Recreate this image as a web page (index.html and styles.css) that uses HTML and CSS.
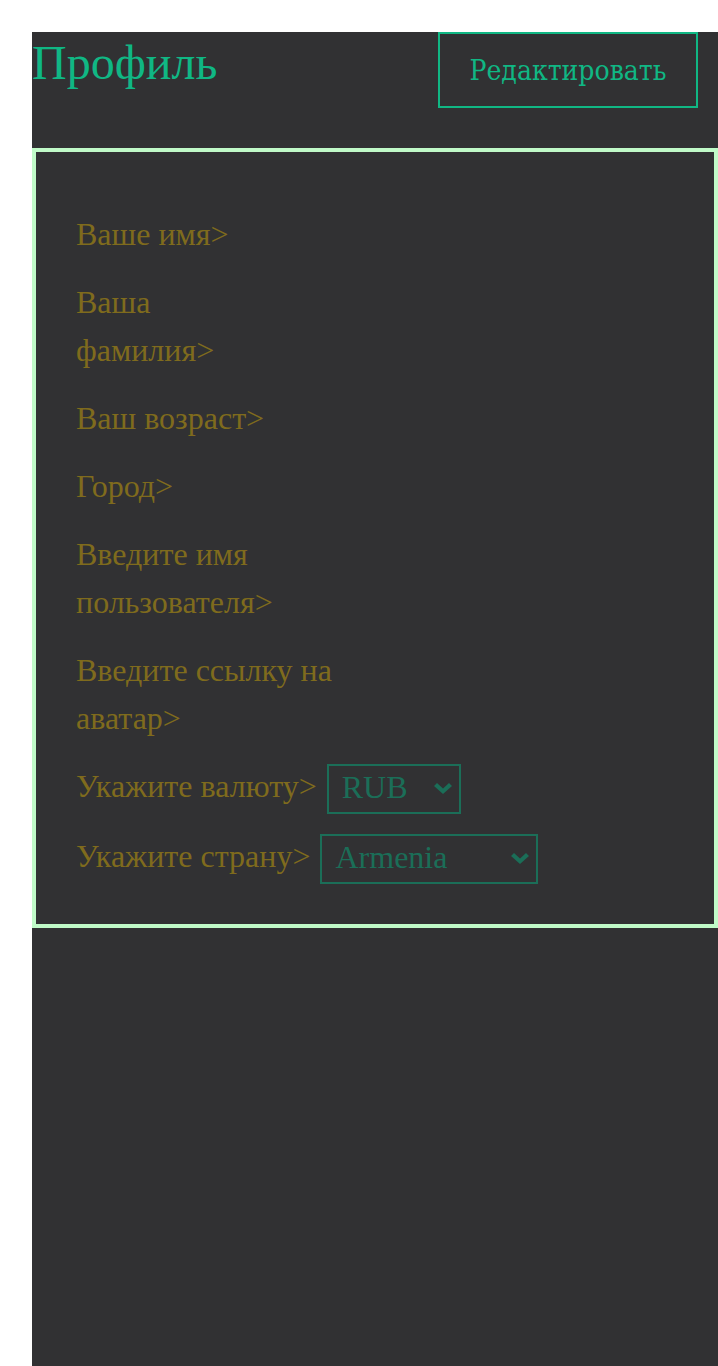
FILE: index.html
```html
<!DOCTYPE html>
<html lang="ru">
<head>
<meta charset="utf-8">
<title>Профиль</title>
<link rel="stylesheet" href="styles.css">
</head>
<body>
<main class="page">
  <header class="header">
    <h1 class="title">Профиль</h1>
    <button class="edit-btn" type="button">Редактировать</button>
  </header>
  <form class="profile-form">
    <div class="row"><label class="label" for="f-name">Ваше имя&gt;</label><input class="ghost" id="f-name" type="text"></div>
    <div class="row"><label class="label" for="f-surname">Ваша фамилия&gt;</label><input class="ghost" id="f-surname" type="text"></div>
    <div class="row"><label class="label" for="f-age">Ваш возраст&gt;</label><input class="ghost" id="f-age" type="text"></div>
    <div class="row"><label class="label" for="f-city">Город&gt;</label><input class="ghost" id="f-city" type="text"></div>
    <div class="row"><label class="label" for="f-user">Введите имя пользователя&gt;</label><input class="ghost" id="f-user" type="text"></div>
    <div class="row"><label class="label" for="f-avatar">Введите ссылку на аватар&gt;</label><input class="ghost" id="f-avatar" type="text"></div>
    <div class="row select-row">
      <label class="label" for="f-cur">Укажите валюту&gt;</label>
      <div class="select-wrap select-currency">
        <select class="select" id="f-cur"><option>RUB</option><option>USD</option><option>EUR</option></select>
        <svg class="chev" viewBox="0 0 18 11" aria-hidden="true"><path d="M0 3 L3 0 L9 5.6 L15 0 L18 3 L9 11 Z" fill="currentColor"/></svg>
      </div>
    </div>
    <div class="row select-row">
      <label class="label" for="f-country">Укажите страну&gt;</label>
      <div class="select-wrap select-country">
        <select class="select" id="f-country"><option>Armenia</option><option>Russia</option><option>Kazakhstan</option></select>
        <svg class="chev" viewBox="0 0 18 11" aria-hidden="true"><path d="M0 3 L3 0 L9 5.6 L15 0 L18 3 L9 11 Z" fill="currentColor"/></svg>
      </div>
    </div>
  </form>
</main>
</body>
</html>
```

FILE: styles.css
```css
html, body {
  margin: 0;
  padding: 0;
  background: #ffffff;
}

body {
  padding: 32px 0 0 32px;
  font-family: "Liberation Serif", "Times New Roman", serif;
}

.page {
  background: #313133;
  min-height: calc(100vh - 32px);
  box-sizing: border-box;
}

.header {
  display: flex;
  justify-content: space-between;
  align-items: flex-start;
  padding-right: 20px;
  margin-bottom: 40px;
}

.title {
  margin: 0;
  font-family: "Liberation Serif", serif;
  font-weight: normal;
  font-size: 48px;
  line-height: 61px;
  color: #10b784;
}

.edit-btn {
  box-sizing: border-box;
  width: 260px;
  height: 76px;
  padding: 0;
  background: transparent;
  border: 2px solid #10b784;
  color: #10b784;
  font-family: "DejaVu Serif Condensed", "DejaVu Serif", serif;
  font-size: 28px;
  cursor: pointer;
}

.profile-form {
  border: 4px solid #c0fac8;
  padding: 58px 40px 40px 40px;
  display: flex;
  flex-direction: column;
  gap: 20px;
}

.row {
  display: flex;
  align-items: center;
  gap: 10px;
}

.select-row {
  align-items: flex-start;
}

.select-row + .select-row {
  margin-top: -2px;
}

.label {
  flex: 0 1 auto;
  font-size: 32px;
  line-height: 48px;
  color: #7f6b1d;
}

.ghost {
  flex: 0 1 385px;
  min-width: 0;
  height: 40px;
  border: none;
  background: transparent;
  padding: 0;
  outline: none;
}

.select-wrap {
  position: relative;
  flex: 0 0 auto;
  margin-top: 2px;
  color: #1b6e58;
}

.select-currency { width: 134px; }
.select-country { width: 218px; }

.select {
  appearance: none;
  -webkit-appearance: none;
  box-sizing: border-box;
  display: block;
  width: 100%;
  height: 50px;
  padding: 0 30px 4px 13px;
  border: 2px solid #1b6e58;
  border-radius: 0;
  background: transparent;
  color: #1b6e58;
  font-family: "Liberation Serif", serif;
  font-size: 32px;
}

.chev {
  position: absolute;
  right: 9px;
  top: 19px;
  width: 18px;
  height: 11px;
  pointer-events: none;
}
```
